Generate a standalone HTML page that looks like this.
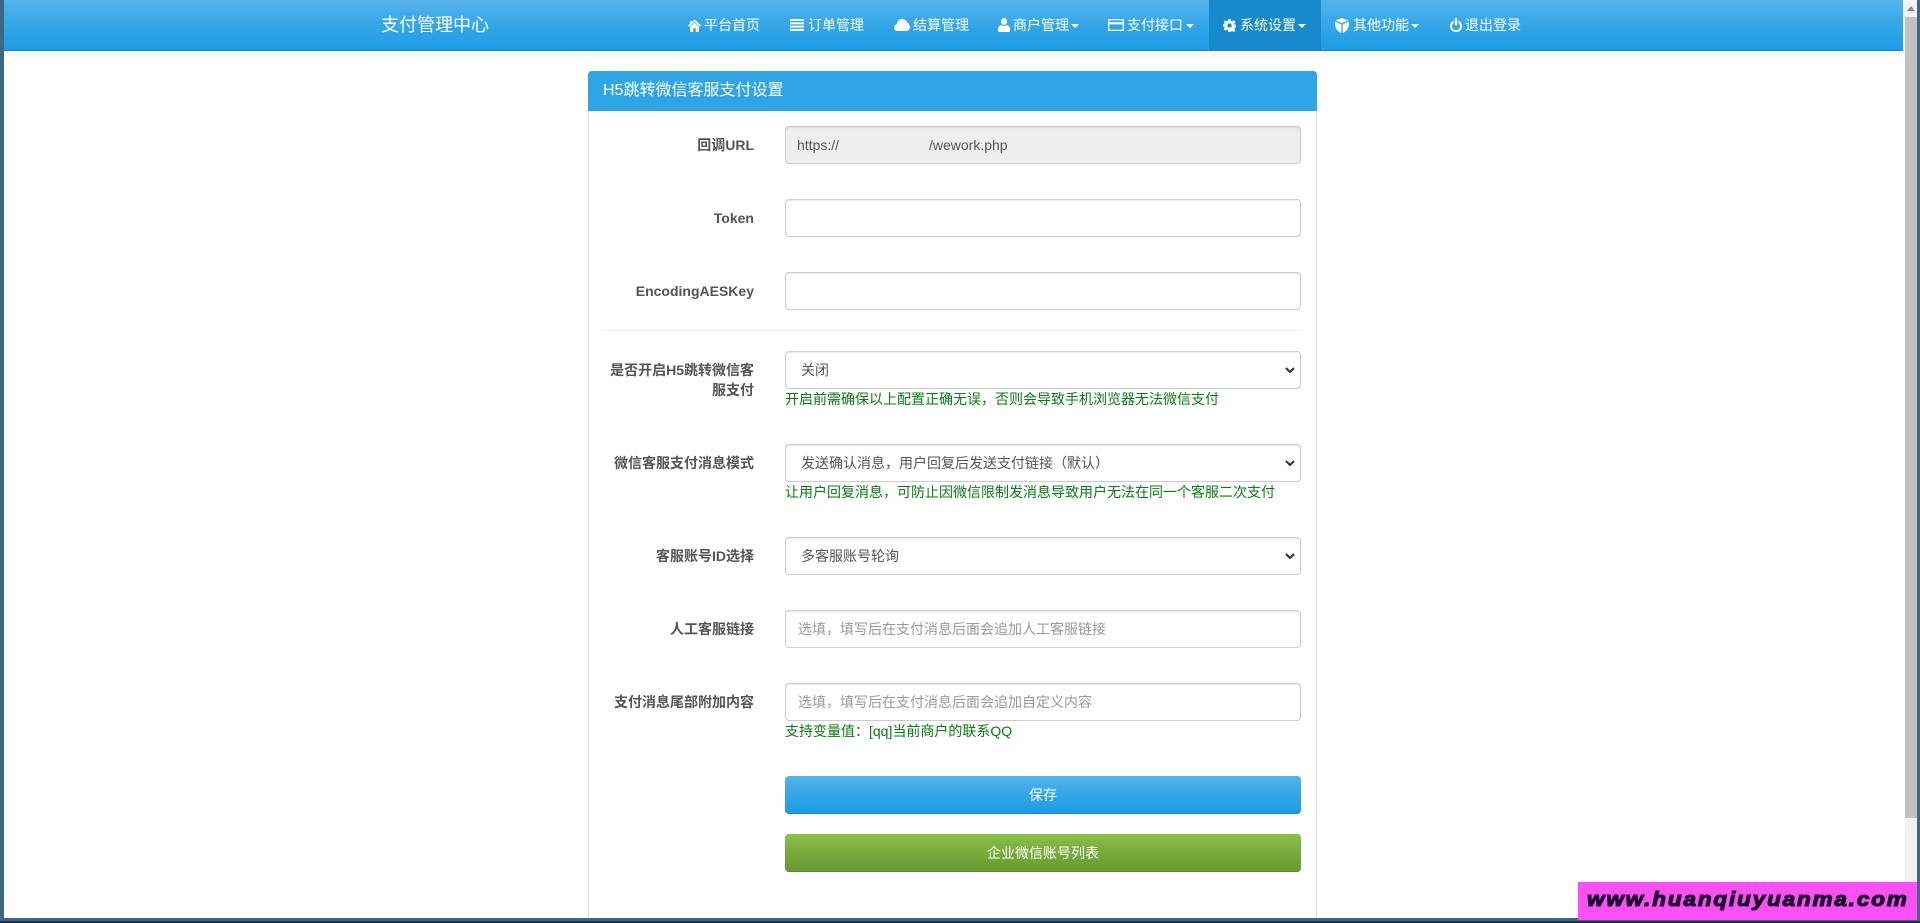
<!DOCTYPE html>
<html lang="zh-CN">
<head>
<meta charset="utf-8">
<title>H5跳转微信客服支付设置</title>
<style>
*{box-sizing:border-box}
html,body{margin:0;padding:0;width:1920px;height:923px;overflow:hidden;background:#fff}
body{position:relative;font:14px/20px "Liberation Sans","Noto Sans CJK SC",sans-serif;color:#555}
.abs,.t,.i,.c,label,input,select,.hint,.btn,.chev{position:absolute}
#nav{left:4px;top:0;width:1899px;height:51px;background:linear-gradient(#54b4eb,#2fa4e7 60%,#1d9ce5);border-bottom:1px solid #178acc;box-shadow:0 1px 10px rgba(0,0,0,.1)}
#active{left:1209px;top:0;width:112px;height:50px;background:#178acc}
.t{top:15px;color:#fff;white-space:nowrap;line-height:20px;font-size:14px}
.i{fill:#fff}
.c{top:24px;width:0;height:0;border-left:4px solid transparent;border-right:4px solid transparent;border-top:4px solid #fff}
#brand{left:381px;top:12px;font-size:18px;line-height:26px}
#panel{left:588px;top:71px;width:729px;height:860px;border:1px solid #ddd;border-radius:4px;background:#fff}
#head{left:588px;top:71px;width:729px;height:40px;background:#2fa4e7;border-radius:4px 4px 0 0;color:#fff;font-size:16px;line-height:40px;padding-left:15px}
label{left:600px;width:154px;text-align:right;font-weight:700;line-height:20px;color:#555;white-space:nowrap}
label.w{white-space:normal;line-height:20px}
input,select{left:785px;width:516px;height:38px;border:1px solid #ccc;border-radius:4px;background:#fff;font:14px "Liberation Sans","Noto Sans CJK SC",sans-serif;color:#555;padding:8px 12px;box-shadow:inset 0 1px 1px rgba(0,0,0,.075);outline:0}
select{appearance:none;-webkit-appearance:none;padding-left:15px}
.chev{left:1285px;width:10px;height:6px;fill:none;stroke:#333;stroke-width:2}
input::placeholder{color:#999;opacity:1}
.ro{left:785px;width:516px;height:38px;border:1px solid #ccc;border-radius:4px;background:#eee;box-shadow:inset 0 1px 1px rgba(0,0,0,.075)}
.hint{left:785px;color:#0b7a12;line-height:20px;white-space:nowrap}
.btn{left:785px;width:516px;height:38px;border-radius:4px;color:#fff;text-align:center;line-height:39px}
#save{top:776px;background:linear-gradient(#54b4eb,#2fa4e7 60%,#1d9ce5);border-bottom:1px solid #178acc}
#list{top:834px;background:linear-gradient(#88c149,#73a839 60%,#699934);border-bottom:1px solid #5f8a2f}
hr{position:absolute;left:603px;top:330px;width:698px;margin:0;border:0;border-top:1px solid #eee}
#fl{left:0;top:0;width:4px;height:923px;background:#3f6587}
#fr{left:1917px;top:0;width:3px;height:923px;background:#3f6587}
#fb{left:0;top:918px;width:1920px;height:3px;background:#3f6587}
#fd{left:0;top:921px;width:1920px;height:2px;background:#1c3148}
#sb{left:1905px;top:0;width:12px;height:918px;background:#f1f1f1}
#th{left:1905px;top:17px;width:12px;height:801px;background:#c1c1c1}
#ar{left:1907px;top:6px;width:0;height:0;border-left:4px solid transparent;border-right:4px solid transparent;border-bottom:5px solid #8a8a8a}
#ad{left:1578px;top:882px;width:339px;height:38px;background:#fb50f2;overflow:hidden}
#ad span{position:absolute;left:9px;top:0;color:#1b0530;font:italic 700 20px/37px "Liberation Sans",sans-serif;letter-spacing:1.7px;white-space:nowrap;-webkit-text-stroke:1.1px #1b0530;transform:scaleX(1.12);transform-origin:0 0}
</style>
</head>
<body>
<div class="abs" id="panel"></div>
<div class="abs" id="head">H5跳转微信客服支付设置</div>

<div class="abs" id="nav"></div>
<div class="abs" id="active"></div>
<span class="t" id="brand">支付管理中心</span>

<svg class="i" style="left:688px;top:19px" width="13" height="13" viewBox="0 0 13 13"><path d="M6.500 0.500 13 6.500l-1 1.200-5.500-5-5.500 5-1-1.200 2-1.800V2h2v1.200z"/><path d="M6.500 3.800 11 7.800V13H7.800V9.200H5.200V13H2V7.800z"/></svg>
<span class="t" style="left:704px">平台首页</span>

<svg class="i" style="left:790px;top:19px" width="14" height="12" viewBox="0 0 14 12"><rect y="0" width="14" height="2"/><rect y="3.300" width="14" height="2"/><rect y="6.600" width="14" height="2"/><rect y="9.900" width="14" height="2"/></svg>
<span class="t" style="left:808px">订单管理</span>

<svg class="i" style="left:894px;top:19px" width="16" height="12" viewBox="0 0 16 12"><path d="M3.500 12C1.500 12 0 10.500 0 8.700 0 7 1.200 5.700 2.800 5.400 3 2.400 5.300 0 8.200 0c2.400 0 4.300 1.500 5 3.700C15 4.400 16 6 16 8c0 2.300-1.800 4-4 4z"/></svg>
<span class="t" style="left:913px">结算管理</span>

<svg class="i" style="left:998px;top:18px" width="12" height="14" viewBox="0 0 12 14"><ellipse cx="6" cy="3.500" rx="3" ry="3.500"/><path d="M0 14v-3c0-2 1.500-3.500 3.500-4 .7.700 1.500 1 2.500 1s1.800-.3 2.500-1c2 .5 3.500 2 3.500 4v3z"/></svg>
<span class="t" style="left:1013px">商户管理</span>
<span class="c" style="left:1071px"></span>

<svg class="i" style="left:1108px;top:19px" width="16" height="12" viewBox="0 0 16 12"><path fill-rule="evenodd" d="M0 0h16v12H0zM1.300 1.300v1.900h13.400V1.300zM1.300 5.400v5.300h13.400V5.400z"/></svg>
<span class="t" style="left:1127px">支付接口</span>
<span class="c" style="left:1186px"></span>

<svg class="i" style="left:1223px;top:19px" width="13" height="13" viewBox="0 0 13 13"><path fill-rule="evenodd" d="M5.300 0h2.400l.3 1.900 1.100.5L10.700 1.300l1.700 1.700-1.100 1.600.5 1.100 1.900.3v2.400l-1.900.3-.5 1.100 1.100 1.600-1.700 1.700-1.600-1.100-1.100.5L7.700 13H5.300L5 11.100l-1.100-.5-1.600 1.100-1.700-1.700 1.100-1.600-.5-1.100L0 7.700V5.300l1.200-.3.500-1.100L.6 3l1.700-1.700 1.600 1.100L5 1.900zM6.500 4.300a2.200 2.200 0 1 0 0 4.400 2.200 2.200 0 0 0 0-4.400z"/></svg>
<span class="t" style="left:1240px">系统设置</span>
<span class="c" style="left:1298px"></span>

<svg class="i" style="left:1335px;top:18px" width="14" height="15" viewBox="0 0 14 15"><path d="M7 0 13.500 2.500 7 5 .5 2.500z"/><path d="M0 3.800 6.300 6.200V15C2.500 13.500 0 10 0 5.500z"/><path d="M14 3.800 7.700 6.200V15C11.500 13.500 14 10 14 5.500z"/></svg>
<span class="t" style="left:1353px">其他功能</span>
<span class="c" style="left:1411px"></span>

<svg class="i" style="left:1450px;top:18px" width="12" height="14" viewBox="0 0 12 14"><rect x="4.800" y="0" width="2.400" height="7.500" rx="1"/><path d="M3.500 2.600v2.500a4 4 0 1 0 5 0V2.600a6 6 0 1 1-5 0z"/></svg>
<span class="t" style="left:1465px">退出登录</span>

<label style="top:135px">回调URL</label>
<div class="abs ro" style="top:126px"></div>
<span class="abs" style="left:797px;top:135px">https://</span>
<span class="abs" style="left:929px;top:135px">/wework.php</span>

<label style="top:208px">Token</label>
<input style="top:199px" type="text">

<label style="top:281px">EncodingAESKey</label>
<input style="top:272px" type="text">

<hr>

<label class="w" style="top:360px">是否开启H5跳转微信客<br>服支付</label>
<select style="top:351px"><option>关闭</option></select>
<svg class="chev" style="top:367px" viewBox="0 0 10 6"><path d="M1 1l4 4 4-4"/></svg>
<div class="hint" style="top:389px">开启前需确保以上配置正确无误，否则会导致手机浏览器无法微信支付</div>

<label style="top:453px">微信客服支付消息模式</label>
<select style="top:444px"><option>发送确认消息，用户回复后发送支付链接（默认）</option></select>
<svg class="chev" style="top:460px" viewBox="0 0 10 6"><path d="M1 1l4 4 4-4"/></svg>
<div class="hint" style="top:482px">让用户回复消息，可防止因微信限制发消息导致用户无法在同一个客服二次支付</div>

<label style="top:546px">客服账号ID选择</label>
<select style="top:537px"><option>多客服账号轮询</option></select>
<svg class="chev" style="top:553px" viewBox="0 0 10 6"><path d="M1 1l4 4 4-4"/></svg>

<label style="top:619px">人工客服链接</label>
<input style="top:610px" type="text" placeholder="选填，填写后在支付消息后面会追加人工客服链接">

<label style="top:692px">支付消息尾部附加内容</label>
<input style="top:683px" type="text" placeholder="选填，填写后在支付消息后面会追加自定义内容">
<div class="hint" style="top:721px">支持变量值：[qq]当前商户的联系QQ</div>

<div class="btn" id="save">保存</div>
<div class="btn" id="list">企业微信账号列表</div>

<div class="abs" id="sb"></div>
<div class="abs" id="th"></div>
<div class="abs" id="ar"></div>
<div class="abs" id="fl"></div>
<div class="abs" id="fr"></div>
<div class="abs" id="fb"></div>
<div class="abs" id="fd"></div>
<div class="abs" id="ad"><span>www.huanqiuyuanma.com</span></div>
</body>
</html>
